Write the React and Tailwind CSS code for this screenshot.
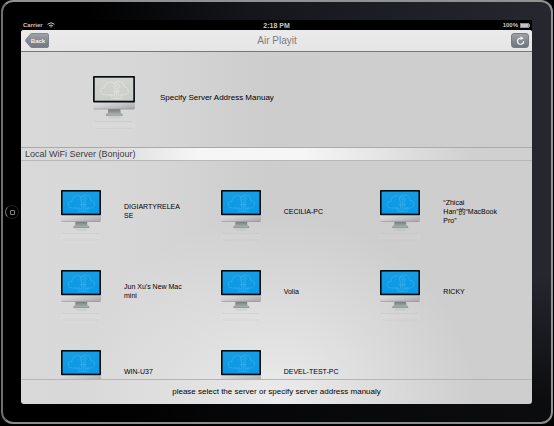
import React, { useId } from "react";

const servers = [
  "DIGIARTYRELEASE",
  "CECILIA-PC",
  "“Zhicai Han”的“MacBook Pro”",
  "Jun Xu's New Mac mini",
  "Volia",
  "RICKY",
  "WIN-U37",
  "DEVEL-TEST-PC",
];

function Computer({ muted = false, className }) {
  const id = useId();
  const line = muted ? "#eceeea" : "#4dbcf0";
  return (
    <svg viewBox="0 0 40 42" className={`shrink-0 overflow-visible ${className}`} aria-hidden="true">
      <defs>
        <linearGradient id={`${id}s`} x1="0" y1="0" x2="0" y2="1">
          <stop offset="0" stopColor={muted ? "#d0d3ce" : "#169de4"} />
          <stop offset="1" stopColor={muted ? "#cbcec8" : "#0c97e6"} />
        </linearGradient>
        <linearGradient id={`${id}c`} x1="0" y1="0" x2="1" y2="1">
          <stop offset="0" stopColor="#e6e6e8" />
          <stop offset="0.5" stopColor="#c9c9cc" />
          <stop offset="1" stopColor="#a3a3a7" />
        </linearGradient>
        <linearGradient id={`${id}f`} x1="0" y1="0" x2="0" y2="1">
          <stop offset="0" stopColor="#6f7777" />
          <stop offset="1" stopColor="#a4aaaa" />
        </linearGradient>
      </defs>
      <path d="M14.500 31.500h11.500l0.500 4.500h-12.500z" fill={`url(#${id}f)`} />
      <path d="M12 38l1-2.300h14.500l1 2.300z" fill="#8e9594" />
      <path d="M13.500 36.700h13.500" stroke="#b9bebe" strokeWidth="0.700" />
      <path d="M0 24h40v6.300q0 1.400-1.400 1.400H1.400Q0 31.700 0 30.300z" fill={`url(#${id}c)`} />
      <path d="M0.600 31.500h38.800" stroke="#8d8d91" strokeWidth="0.500" />
      <rect width="40" height="25.200" rx="0.800" fill="#050b10" />
      <rect x="1.600" y="1.600" width="36.800" height="22" fill={`url(#${id}s)`} />
      <g fill="none" stroke={line} strokeWidth="0.600" opacity="0.800">
        <path d="M19 18H11.500C5.500 18 6 11 11 11.300C11 6 17 4 20 7.200C23 3 30 5 29.800 10.500C35 10.500 35 18 29.500 18H25" />
        <circle cx="22.300" cy="9.300" r="2.900" />
        <circle cx="22.300" cy="9.300" r="0.900" />
        <path d="M20.600 12.500v6.500H16M22.300 12.500v8.700M24 12.500v6.500h4.500M17 21.300h11M19 14.500h7" />
      </g>
      <path d="M14 38.500h12l-1 2h-10z" fill="#999" opacity="0.180" />
      <path d="M1 43.500h37" stroke="#b5b9c2" strokeWidth="0.600" opacity="0.450" />
      <path d="M0 44.200h40v7H0z" fill="#ffffff" opacity="0.060" />
      <path d="M2 50h36" stroke="#b4bac8" strokeWidth="1.400" opacity="0.200" />
    </svg>
  );
}

function StatusBar() {
  return (
    <div className="grid h-[10px] shrink-0 grid-cols-3 items-center bg-black px-[2px] text-[7px] leading-none font-bold text-[#c8c8c8]">
      <div className="flex items-center gap-1">
        <span className="text-[6px]">Carrier</span>
        <svg viewBox="0 0 16 12" className="h-[6px] w-[8px]" fill="none" stroke="#c8c8c8" strokeWidth="2" aria-hidden="true">
          <path d="M1 4.500Q8-1.500 15 4.500M4 7.800Q8 4.200 12 7.800" />
          <path d="M6 9.300Q8 7.800 10 9.300L8 11.500z" fill="#c8c8c8" stroke="none" />
        </svg>
      </div>
      <span className="text-center">2:18 PM</span>
      <div className="flex items-center justify-end gap-[2px]">
        <span className="text-[6px]">100%</span>
        <svg viewBox="0 0 10 5" className="h-[5px] w-[10px]" aria-hidden="true">
          <rect width="9" height="5" fill="#8c8c8c" />
          <rect x="1" y="1" width="7" height="3" fill="#c4c4c4" />
          <path d="M9 1h1v3H9z" fill="#999" />
        </svg>
      </div>
    </div>
  );
}

function NavBar() {
  return (
    <header className="grid h-[22px] shrink-0 grid-cols-[1fr_auto_1fr] items-center border-b border-[#777] bg-linear-to-b from-[#ebebeb] to-[#e5e5e5] pr-[3px] pl-1">
      <button type="button" className="grid h-[15px] w-6 place-items-center justify-self-start">
        <svg viewBox="0 0 24 15" className="col-start-1 row-start-1 h-[15px] w-6" aria-hidden="true">
          <defs>
            <linearGradient id="backFill" x1="0" y1="0" x2="0" y2="1">
              <stop offset="0" stopColor="#a0a4aa" />
              <stop offset="0.500" stopColor="#848a92" />
              <stop offset="1" stopColor="#737981" />
            </linearGradient>
          </defs>
          <path
            d="M7 0.500H22Q23.500 0.500 23.500 2V13Q23.500 14.500 22 14.500H7Q6 14.500 5 13.500L0.800 8.300Q0.300 7.500 0.800 6.700L5 1.500Q6 0.500 7 0.500z"
            fill="url(#backFill)"
            stroke="#686e76"
            strokeWidth="0.700"
          />
        </svg>
        <span className="col-start-1 row-start-1 pl-[2px] text-[6px] leading-none font-bold text-[#f1f1f1]">Back</span>
      </button>
      <h1 className="text-[10px] leading-none text-[#7b7d82]">Air Playit</h1>
      <button
        type="button"
        aria-label="Refresh"
        className="grid h-[15px] w-[18px] place-items-center justify-self-end rounded-[3px] border border-[#777d85] bg-linear-to-b from-[#9ca0a6] to-[#70767f]"
      >
        <svg viewBox="0 0 18 18" className="h-[9px] w-[9px]" fill="none" stroke="#f6f6f6" strokeWidth="2.400" aria-hidden="true">
          <path d="M10 4.500H8.500A6 6 0 1 0 15 10" />
          <path d="M9 0.500L15.500 4.500L9 8.500z" fill="#f6f6f6" stroke="none" />
        </svg>
      </button>
    </header>
  );
}

export default function App() {
  return (
    <div className="h-screen w-full bg-black pr-px pb-[2px] pl-px font-['Liberation_Sans','Noto_Sans_CJK_SC',sans-serif] text-black">
      <div className="flex h-full rounded-[12px] border-2 border-t-[#8f9192] border-r-[#929395] border-b-[#8b8b8b] border-l-[#6f6f6f] bg-[linear-gradient(to_bottom,transparent_65%,#000000b0_95%),linear-gradient(to_right,#000_15%,#14161b_45%,#1c1e25_70%,#26272f)]">
        <div className="flex w-[18px] shrink-0 items-center justify-center">
          <button
            type="button"
            aria-label="Home"
            className="grid h-[14px] w-[14px] place-items-center rounded-full border border-[#1d1d1d] border-l-[#777]"
          >
            <span className="h-[5px] w-[5px] rounded-[1px] border border-[#858585]" />
          </button>
        </div>
        <div className="flex min-w-0 flex-1 flex-col py-[18px]">
          <StatusBar />
          <div className="flex min-h-0 flex-1 flex-col overflow-hidden rounded-[3px] bg-[radial-gradient(ellipse_200px_190px_at_50%_100%,#ececec,transparent),linear-gradient(to_right,#d9d9d9,#d7d7d7_22%,#cdcdcd_48%,#cecece)]">
            <NavBar />
            <button type="button" className="flex h-[95px] shrink-0 items-center gap-[25px] pb-[3px] pl-[72px] text-left text-[8px] leading-[10px]">
              <Computer muted className="h-[44px] w-[42px]" />
              <span>Specify Server Address Manuay</span>
            </button>
            <h2 className="h-[14px] shrink-0 border-y border-t-[#aaa] border-b-[#b8b8b8] bg-[linear-gradient(to_right,#d9d9d9_15%,#f6f6f6_35%,#f6f6f6_55%,#d0d0d0_88%)] pl-1 text-[9px] leading-[12px] text-[#3c3c3c]">
              Local WiFi Server (Bonjour)
            </h2>
            <ul className="grid min-h-0 flex-1 auto-rows-[80px] grid-cols-3 gap-x-[38px] overflow-hidden pt-[10px] pr-[30px] pl-10">
              {servers.map((name) => (
                <li key={name}>
                  <button type="button" className="flex h-full w-full items-center gap-[23px] text-left text-[7px] leading-[9px]">
                    <Computer className="h-[42px] w-[40px]" />
                    <span className="min-w-0 flex-1 wrap-anywhere">{name}</span>
                  </button>
                </li>
              ))}
            </ul>
            <footer className="h-[25px] shrink-0 border-t border-[#b5b5b5] text-center text-[8px] leading-[24px]">
              please select the server or specify server address manualy
            </footer>
          </div>
        </div>
        <div className="w-[19px] shrink-0" />
      </div>
    </div>
  );
}
